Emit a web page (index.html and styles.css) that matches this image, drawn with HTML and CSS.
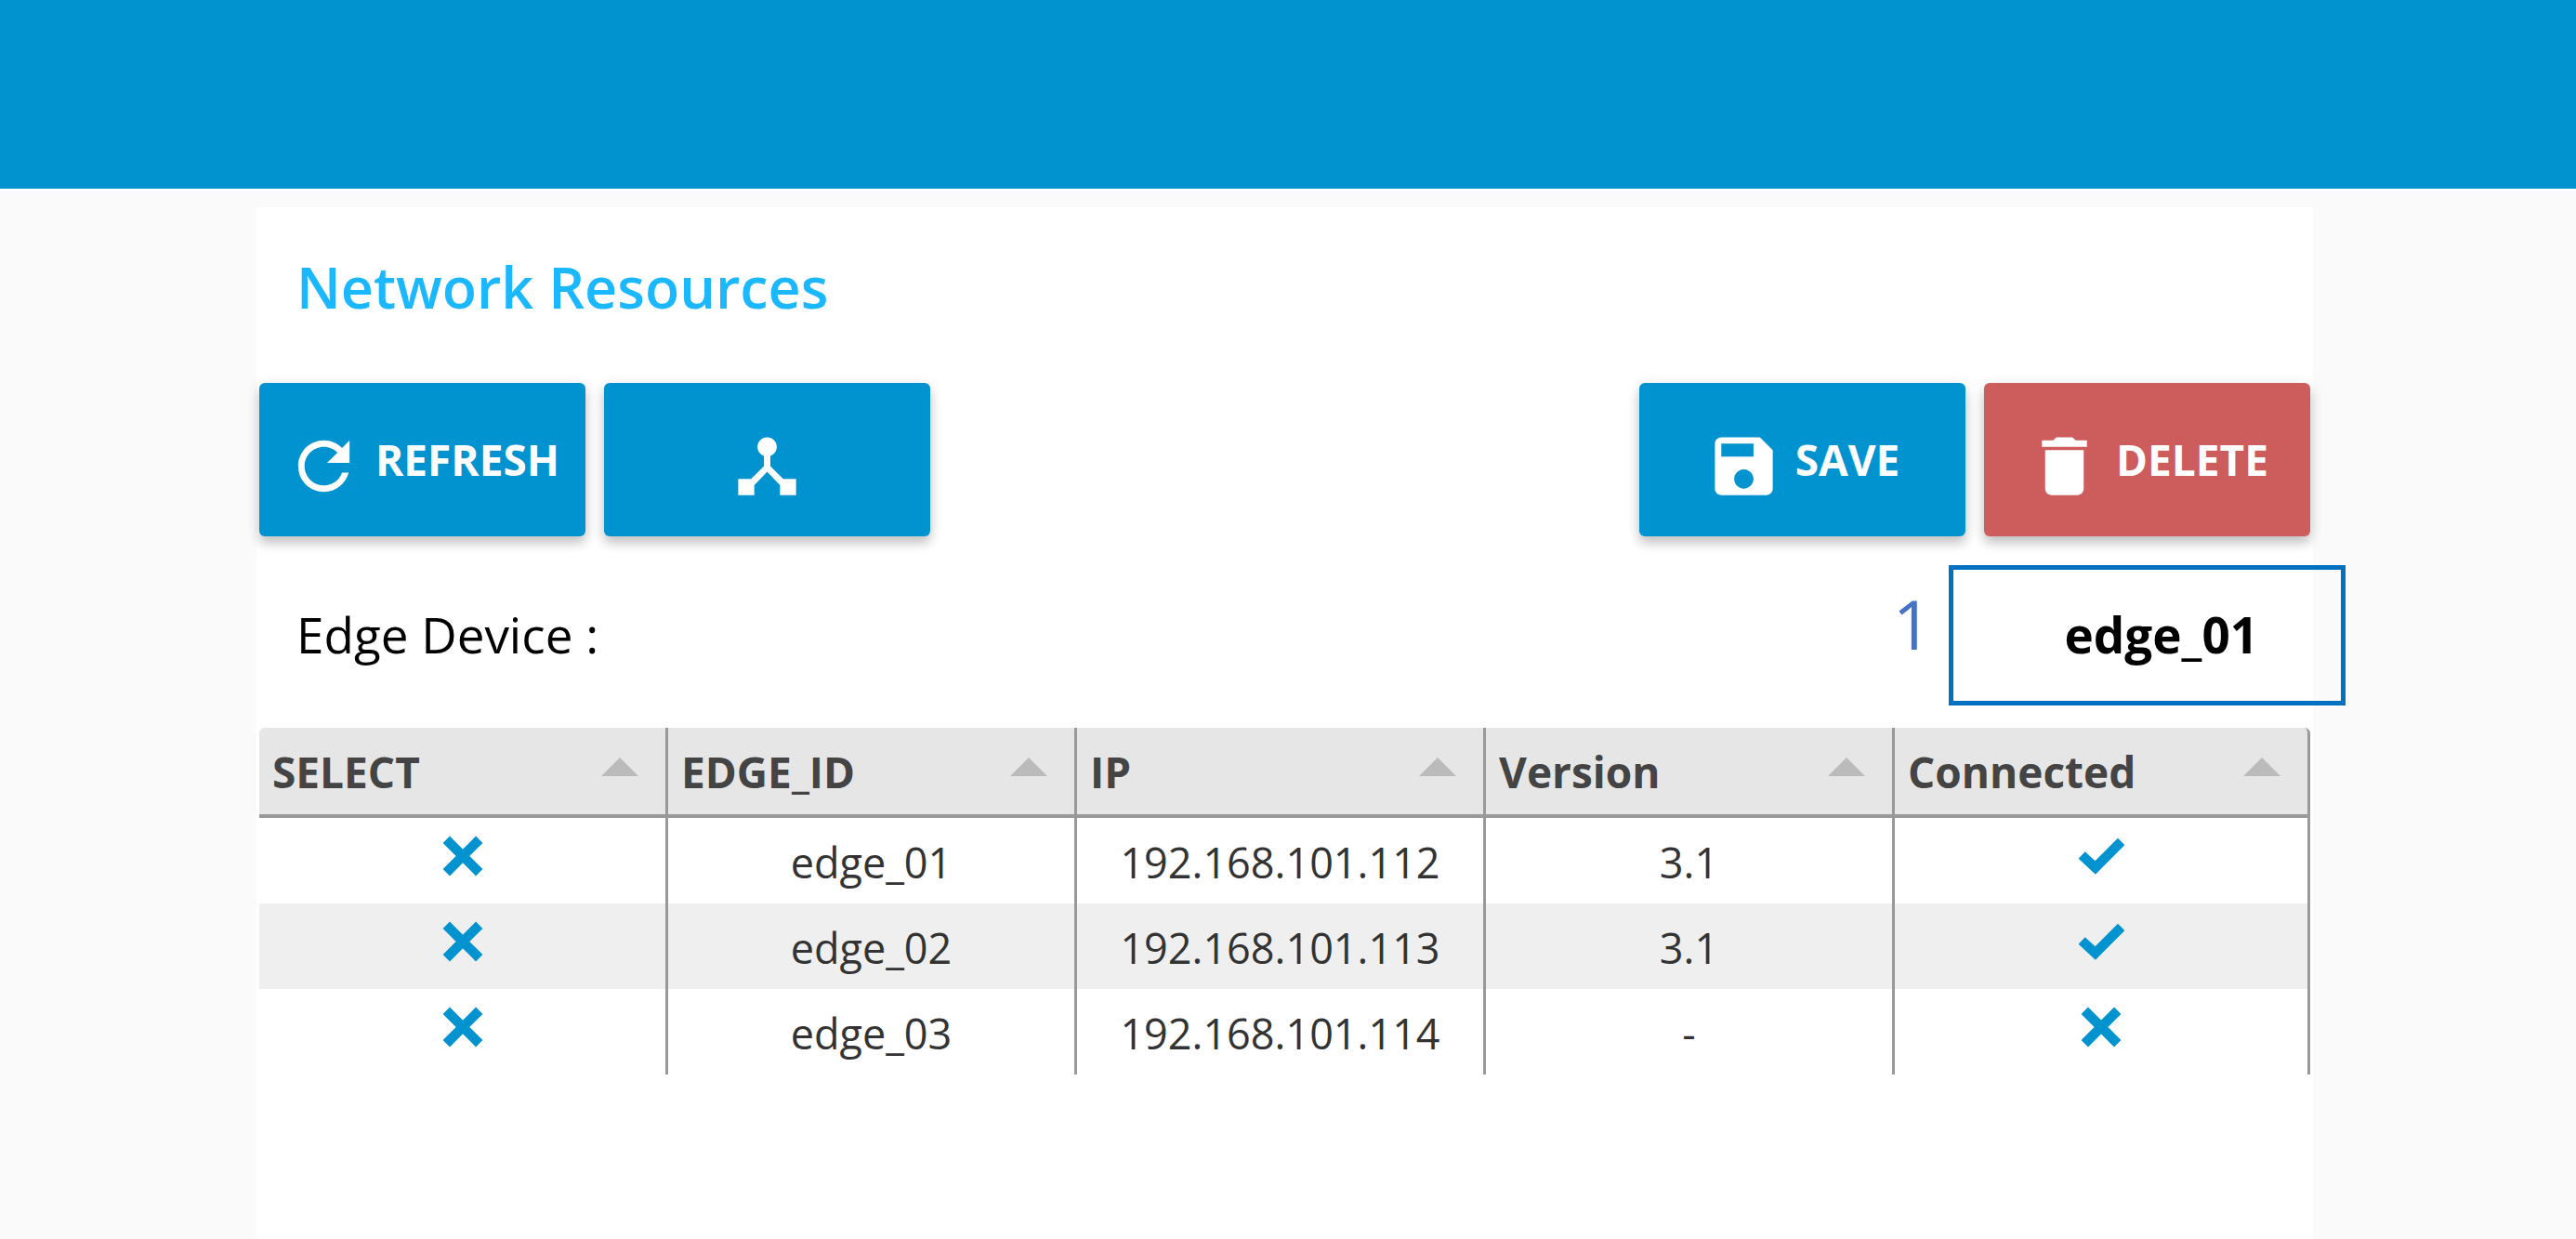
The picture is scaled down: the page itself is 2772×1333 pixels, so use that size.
FILE: index.html
```html
<!DOCTYPE html>
<html lang="en">
<head>
<meta charset="utf-8">
<title>Network Resources</title>
<link rel="stylesheet" href="styles.css">
</head>
<body>
<svg class="sprite" aria-hidden="true">
  <symbol id="refresh" viewBox="0 0 24 24"><path d="M17.65 6.35C16.2 4.9 14.21 4 12 4c-4.42 0-7.99 3.58-7.99 8s3.57 8 7.99 8c3.73 0 6.84-2.55 7.73-6h-2.08c-.82 2.33-3.04 4-5.65 4-3.31 0-6-2.69-6-6s2.69-6 6-6c1.66 0 3.14.69 4.22 1.78L13 11h7V4l-2.35 2.35z"/></symbol>
  <symbol id="hub" viewBox="0 0 24 24"><path d="M17 16l-4-4V8.820C14.160 8.400 15 7.300 15 6c0-1.660-1.340-3-3-3S9 4.340 9 6c0 1.300.840 2.400 2 2.820V12l-4 4H3v5h5v-3.050l4-4.200 4 4.200V21h5v-5h-4z"/></symbol>
  <symbol id="save" viewBox="0 0 24 24"><path d="M17 3H5c-1.110 0-2 .9-2 2v14c0 1.100.890 2 2 2h14c1.100 0 2-.9 2-2V7l-4-4zm-5 16c-1.660 0-3-1.340-3-3s1.340-3 3-3 3 1.340 3 3-1.340 3-3 3zm3-10H5V5h10v4z"/></symbol>
  <symbol id="delete" viewBox="0 0 24 24"><path d="M6 19c0 1.100.9 2 2 2h8c1.100 0 2-.9 2-2V7H6v12zM19 4h-3.500l-1-1h-5l-1 1H5v2h14V4z"/></symbol>
  <symbol id="cross" viewBox="0 0 24 24"><path d="M3.500 3.500l17 17m0-17l-17 17" fill="none" stroke="currentColor" stroke-width="5"/></symbol>
  <symbol id="check" viewBox="0 0 24 24"><path d="M2 11.500l7 6.500L22.400 4.500" fill="none" stroke="currentColor" stroke-width="5"/></symbol>
</svg>
<header class="topbar"></header>
<main class="panel">
  <h1 class="title">Network Resources</h1>
  <div class="toolbar">
    <div class="group">
      <button class="btn" type="button"><svg class="btn-icon"><use href="#refresh"/></svg>REFRESH</button>
      <button class="btn" type="button" aria-label="Topology"><svg class="btn-icon"><use href="#hub"/></svg></button>
    </div>
    <div class="group">
      <button class="btn" type="button"><svg class="btn-icon"><use href="#save"/></svg>SAVE</button>
      <button class="btn btn-danger" type="button"><svg class="btn-icon"><use href="#delete"/></svg>DELETE</button>
    </div>
  </div>
  <div class="device">
    <span>Edge Device :</span>
    <strong>edge_01</strong>
    <div class="callout"><span class="callout-number">1</span></div>
  </div>
  <table class="grid">
    <colgroup><col><col><col><col><col class="last"></colgroup>
    <thead>
      <tr>
        <th><div class="head">SELECT<i class="sort"></i></div></th>
        <th><div class="head">EDGE_ID<i class="sort"></i></div></th>
        <th><div class="head">IP<i class="sort"></i></div></th>
        <th><div class="head">Version<i class="sort"></i></div></th>
        <th><div class="head">Connected<i class="sort"></i></div></th>
      </tr>
    </thead>
    <tbody>
      <tr>
        <td><svg class="mark"><use href="#cross"/></svg></td>
        <td>edge_01</td><td>192.168.101.112</td><td>3.1</td>
        <td><svg class="mark"><use href="#check"/></svg></td>
      </tr>
      <tr>
        <td><svg class="mark"><use href="#cross"/></svg></td>
        <td>edge_02</td><td>192.168.101.113</td><td>3.1</td>
        <td><svg class="mark"><use href="#check"/></svg></td>
      </tr>
      <tr>
        <td><svg class="mark"><use href="#cross"/></svg></td>
        <td>edge_03</td><td>192.168.101.114</td><td>-</td>
        <td><svg class="mark"><use href="#cross"/></svg></td>
      </tr>
    </tbody>
  </table>
</main>
</body>
</html>
```
FILE: styles.css
```css
* { box-sizing: border-box; }

body {
  margin: 0;
  min-height: 100vh;
  display: flex;
  flex-direction: column;
  background: #fafafa;
  color: #000;
  font-family: "Open Sans", "Noto Sans", sans-serif;
}

.sprite { display: none; }

.topbar {
  height: 206px;
  background: #0093d0;
  border-bottom: 3px solid #fff;
}

.panel {
  flex: 1;
  margin: 17px 283px 0 276px;
  padding: 0 3px;
  background: #fff;
}

.title {
  margin: 0;
  padding: 44px 40px 61px;
  color: #1cb8ff;
  font-size: 61px;
  line-height: 84px;
  font-weight: 600;
}

.toolbar {
  display: flex;
  justify-content: space-between;
}

.group {
  display: flex;
  gap: 20px;
}

.btn {
  width: 351px;
  height: 165px;
  padding: 0 0 2px;
  display: flex;
  align-items: center;
  justify-content: center;
  gap: 14px;
  border: 0;
  border-radius: 6px;
  background: #0093d0;
  box-shadow: 0 8px 12px rgba(0, 0, 0, 0.18), 0 2px 16px rgba(0, 0, 0, 0.1);
  color: #fff;
  font-family: inherit;
  font-size: 46px;
  line-height: 60px;
  font-weight: 700;
}

.btn-danger { background: #cd5c5c; }

.btn-icon {
  width: 83px;
  height: 83px;
  flex: none;
  margin-top: 16px;
  fill: currentColor;
}

.device {
  position: relative;
  height: 206px;
  padding: 6px 56px 0 40px;
  display: flex;
  align-items: center;
  justify-content: space-between;
  font-size: 53px;
  line-height: 70px;
}

.callout {
  position: absolute;
  top: 31px;
  right: -38px;
  width: 427px;
  height: 151px;
  border: 5px solid #0070c0;
}

.callout-number {
  position: absolute;
  top: 8px;
  right: 440px;
  color: #4472c4;
  font-size: 74px;
  line-height: 100px;
}

.grid {
  width: 100%;
  table-layout: fixed;
  border-collapse: separate;
  border-spacing: 0;
  color: #333;
  font-size: 45px;
  line-height: 60px;
  text-align: center;
}

.grid .last { width: 447px; }

.grid th,
.grid td {
  padding: 0;
  border-right: 3px solid #999;
}

.grid th {
  height: 97px;
  background: #e6e6e6;
  border-bottom: 4px solid #999;
  color: #444;
  font-size: 46px;
}

.grid th:first-child { border-top-left-radius: 6px; }
.grid th:last-child { border-top-right-radius: 6px; }

.head {
  padding: 0 29px 0 14px;
  display: flex;
  align-items: center;
  justify-content: space-between;
}

.sort {
  margin-bottom: 10px;
  border: 20px solid transparent;
  border-top-width: 0;
  border-bottom-color: #bbb;
}

.grid td { height: 92px; padding-top: 4px; }
.grid tbody tr:nth-child(even) { background: #efefef; }

.mark {
  display: block;
  width: 50px;
  height: 50px;
  margin: 0 auto 14px;
  color: #0093d0;
}
```
